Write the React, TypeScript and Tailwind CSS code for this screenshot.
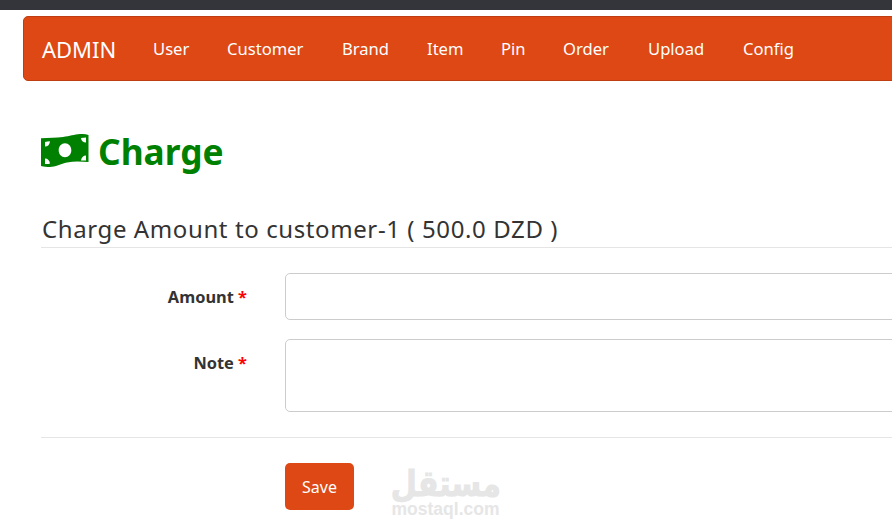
import React from "react";

const links: [string, string][] = [
  ["User", "w-[36px]"],
  ["Customer", "w-[77px]"],
  ["Brand", "w-[47px]"],
  ["Item", "w-[36px]"],
  ["Pin", "w-[24px]"],
  ["Order", "w-[47px]"],
  ["Upload", "w-[57px]"],
  ["Config", "w-[52px]"],
];

function Bill() {
  return (
    <svg width="48" height="34" viewBox="0 0 48 34" className="shrink-0 self-start">
      <path
        fillRule="evenodd"
        fill="#008000"
        d="M0 4.3C8 3.5 15 4 22 3C29 2 33 0.5 39 0C42 -0.2 45 0.3 47.5 1V28C40 27.5 33 27 26 28.5C20 30 14 33 9 33C6 33 3 32.8 0 32ZM24 9.3C20.4 9.3 17.7 12.4 17.7 16.3C17.7 20.2 20.4 23.3 24 23.3C27.6 23.3 30.3 20.2 30.3 16.3C30.3 12.4 27.6 9.3 24 9.3ZM4 8V12.5C7 12.5 8.6 10.5 9 7.2C7.3 7.3 5.6 7.6 4 8ZM40 4C40.3 6.8 42 8.5 45 8.5V3.5C43.3 3.5 41.6 3.7 40 4ZM4 24.5V30C5.8 30.2 7.4 30.2 9 29.5C8.6 26.5 7 24.5 4 24.5ZM45 21.5C42.2 21.5 40.4 23.6 40 26.5C41.7 26.3 43.4 26.4 45 26.5Z"
      />
    </svg>
  );
}

export default function App() {
  return (
    <div className="w-[892px] h-[529px] overflow-hidden bg-white font-['Noto_Sans',sans-serif] text-[#333]">
      <div className="h-[10px] bg-[#33353a]" />
      <nav className="mt-[6px] ml-[23px] w-[900px] h-[65px] flex items-center rounded-l-[5px] border border-[#bf3e11] bg-[#dd4814] text-white pl-[18px] pt-px">
        <span className="w-[111px] text-[22px]">ADMIN</span>
        <div className="flex gap-[38px] text-[16.6px]">
          {links.map(([t, w]) => (
            <span key={t} className={`${w} whitespace-nowrap`}>{t}</span>
          ))}
        </div>
      </nav>

      <div className="ml-[41px]">
        <div className="mt-[53px] h-[36px] flex items-center gap-[9px]">
          <Bill />
          <h1 className="-mt-[2px] text-[35.3px] leading-[36px] font-bold text-[#008000]">Charge</h1>
        </div>

        <h2 className="mt-[38px] pt-[3px] pl-px text-[24px] leading-[36px] tracking-[0.6px] whitespace-nowrap border-b border-[#e5e5e5] h-[40px]">
          Charge Amount to customer-1 ( 500.0 DZD )
        </h2>

        <div className="mt-[25px] flex">
          <label className="w-[206px] shrink-0 pt-[13px] text-right text-[16.4px] leading-[22px] font-bold">
            Amount <span className="text-[#ff0000]">*</span>
          </label>
          <input className="ml-[38px] w-[700px] shrink-0 h-[47px] rounded-[5px] border border-[#ccc]" />
        </div>

        <div className="mt-[19px] flex">
          <label className="w-[206px] shrink-0 pt-[13px] text-right text-[16.4px] leading-[22px] font-bold">
            Note <span className="text-[#ff0000]">*</span>
          </label>
          <div className="ml-[38px] w-[700px] shrink-0 h-[73px] rounded-[5px] border border-[#ccc]" />
        </div>

        <div className="mt-[25px] border-t border-[#e5e5e5]" />

        <div className="mt-[25px] ml-[244px] flex items-start">
          <button className="w-[69px] h-[47px] rounded-[5px] bg-[#dd4814] text-white text-[16px]">Save</button>
          <div className="ml-[38px] mt-[6px] w-[107px] flex flex-col items-center text-[#e6e6e6]">
            <span dir="rtl" className="font-['DejaVu_Sans',sans-serif] font-bold text-[36px] leading-[30px] h-[30px] scale-x-[0.835] whitespace-nowrap [-webkit-text-stroke:1px_#e6e6e6]">مستقل</span>
            <span className="mt-[2px] font-['Liberation_Sans',sans-serif] font-bold text-[17.5px] leading-[17px] whitespace-nowrap">mostaql.com</span>
          </div>
        </div>
      </div>
    </div>
  );
}
